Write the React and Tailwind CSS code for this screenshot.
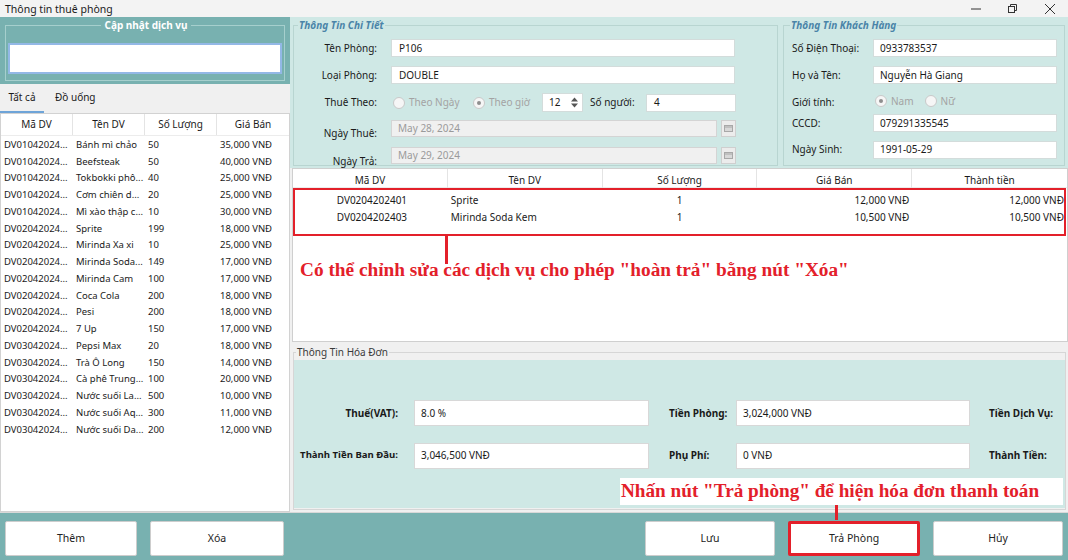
import React from 'react';

const leftRows = [
  ['DV01042024...', 'Bánh mì chảo', '50', '35,000 VNĐ'],
  ['DV01042024...', 'Beefsteak', '50', '40,000 VNĐ'],
  ['DV01042024...', 'Tokbokki phô...', '40', '25,000 VNĐ'],
  ['DV01042024...', 'Cơm chiên d...', '20', '25,000 VNĐ'],
  ['DV01042024...', 'Mì xào thập c...', '10', '30,000 VNĐ'],
  ['DV02042024...', 'Sprite', '199', '18,000 VNĐ'],
  ['DV02042024...', 'Mirinda Xa xi', '10', '25,000 VNĐ'],
  ['DV02042024...', 'Mirinda Soda...', '149', '17,000 VNĐ'],
  ['DV02042024...', 'Mirinda Cam', '100', '17,000 VNĐ'],
  ['DV02042024...', 'Coca Cola', '200', '18,000 VNĐ'],
  ['DV02042024...', 'Pesi', '200', '18,000 VNĐ'],
  ['DV02042024...', '7 Up', '150', '17,000 VNĐ'],
  ['DV03042024...', 'Pepsi Max', '20', '18,000 VNĐ'],
  ['DV03042024...', 'Trà Ô Long', '150', '14,000 VNĐ'],
  ['DV03042024...', 'Cà phê Trung...', '100', '20,000 VNĐ'],
  ['DV03042024...', 'Nước suối La...', '500', '10,000 VNĐ'],
  ['DV03042024...', 'Nước suối Aq...', '300', '11,000 VNĐ'],
  ['DV03042024...', 'Nước suối Da...', '200', '12,000 VNĐ'],
];

const usedRows = [
  ['DV0204202401', 'Sprite', '1', '12,000 VNĐ', '12,000 VNĐ'],
  ['DV0204202403', 'Mirinda Soda Kem', '1', '10,500 VNĐ', '10,500 VNĐ'],
];

const Input = ({ value, className = '' }) => (
  <div className={`h-[18px] bg-white border border-[#d3dcdb] flex items-center pl-[7px] whitespace-nowrap ${className}`}>
    {value}
  </div>
);

const Radio = ({ checked, label }) => (
  <div className="flex items-center text-[#a3a3a3]">
    <span className="w-[12px] h-[12px] rounded-full border border-[#c9c9c9] bg-[#f6f6f6] flex items-center justify-center">
      {checked && <span className="w-[4px] h-[4px] rounded-full bg-[#8e8e8e]" />}
    </span>
    <span className="ml-[4px]">{label}</span>
  </div>
);

const DateField = ({ value }) => (
  <div className="flex items-center h-[17px] ml-[14px]">
    <div className="w-[326px] h-full bg-[#f0f0f0] border border-[#d4d4d4] flex items-center pl-[6px] text-[#9a9a9a]">
      {value}
    </div>
    <div className="ml-[4px] w-[15px] h-full bg-[#ececec] border border-[#cfcfcf] flex items-center justify-center">
      <svg width="9" height="7" viewBox="0 0 9 7">
        <rect x="0.5" y="0.5" width="8" height="6" fill="#d8d8d8" stroke="#a8a8a8" />
        <line x1="0.5" y1="2" x2="8.5" y2="2" stroke="#a8a8a8" />
      </svg>
    </div>
  </div>
);

const Button = ({ children, className = '' }) => (
  <div className={`h-[35px] bg-white rounded-[2px] flex items-center justify-center text-[10.5px] text-[#222] ${className}`}>
    {children}
  </div>
);

export default function App() {
  return (
    <div className="relative w-[1068px] h-[560px] flex flex-col bg-[#f0f0f0] overflow-hidden font-['Noto_Sans',sans-serif] text-[#1a1a1a]">
      {/* title bar */}
      <div className="h-[17px] flex items-center bg-[#f3f3f3] pl-[5px] text-[10.5px]">
        <span className="pt-[2px]">Thông tin thuê phòng</span>
        <div className="ml-auto flex h-full items-center">
          <div className="w-[37px] flex justify-center">
            <svg width="10" height="2" viewBox="0 0 10 2"><line x1="0" y1="1" x2="10" y2="1" stroke="#333" /></svg>
          </div>
          <div className="w-[37px] flex justify-center">
            <svg width="9" height="9" viewBox="0 0 9 9" fill="none" stroke="#333">
              <rect x="0.5" y="2.5" width="6" height="6" />
              <path d="M2.5 2.5V0.5H8.5V6.5H6.5" />
            </svg>
          </div>
          <div className="w-[37px] flex justify-center">
            <svg width="10" height="10" viewBox="0 0 10 10" stroke="#333"><line x1="0" y1="0" x2="10" y2="10" /><line x1="10" y1="0" x2="0" y2="10" /></svg>
          </div>
        </div>
      </div>

      <div className="flex flex-1 min-h-0">
        {/* left column */}
        <div className="w-[290px] flex flex-col">
          <div className="h-[67px] bg-[#78b1b0] px-[5px] pt-[1px]">
            <fieldset className="h-[63px] border border-[#a6cfcd] pl-[2px]">
              <legend className="mx-auto px-[3px] text-[10px] leading-[14px] font-bold text-white">Cập nhật dịch vụ</legend>
              <div className="mt-[11px] w-[274px] h-[31px] bg-white border-2 border-[#93b8e6]" />
            </fieldset>
          </div>
          <div className="h-[29px] flex text-[10px]">
            <div className="w-[44px] flex items-center justify-center border-b-2 border-[#6ea4d8]">Tất cả</div>
            <div className="ml-[11px] flex items-center pb-[2px]">Đồ uống</div>
          </div>
          <div className="flex-1 bg-white border border-[#d2d2d2] text-[9.5px]">
            <div className="grid grid-cols-[72px_72px_72px_72px] h-[22px] border-b border-[#ececec] text-[10px]">
              {['Mã DV', 'Tên DV', 'Số Lượng', 'Giá Bán'].map((h, i) => (
                <div key={h} className={`flex items-center justify-center ${i < 3 ? 'border-r border-[#e4e4e4]' : ''}`}>{h}</div>
              ))}
            </div>
            <div className="pt-[0.5px]">
              {leftRows.map((r, i) => (
                <div key={i} className="grid grid-cols-[72px_72px_72px_72px] h-[16.76px] items-center">
                  {r.map((c, j) => (
                    <div key={j} className="pl-[3px] whitespace-nowrap overflow-hidden">{c}</div>
                  ))}
                </div>
              ))}
            </div>
          </div>
        </div>

        {/* right column */}
        <div className="flex-1 flex flex-col">
          <div className="h-[151px] bg-[#cfe8e5] flex text-[10px]">
            <fieldset className="ml-[3px] mt-[1px] w-[485px] h-[148px] border border-[#b8d5d1]">
              <legend className="ml-[4px] px-[1px] text-[10px] leading-[14px] font-bold italic text-[#4a84a8]">Thông Tin Chi Tiết</legend>
              <div className="flex flex-col">
                <div className="mt-[7px] flex items-center h-[18px]">
                  <div className="w-[83px] text-right">Tên Phòng:</div>
                  <Input value="P106" className="ml-[14px] w-[344px]" />
                </div>
                <div className="mt-[9px] flex items-center h-[18px]">
                  <div className="w-[83px] text-right">Loại Phòng:</div>
                  <Input value="DOUBLE" className="ml-[14px] w-[344px]" />
                </div>
                <div className="mt-[9px] flex items-center h-[19px]">
                  <div className="w-[83px] text-right">Thuê Theo:</div>
                  <div className="ml-[16px] w-[80px]"><Radio label="Theo Ngày" /></div>
                  <div className="w-[69px]"><Radio checked label="Theo giờ" /></div>
                  <div className="w-[41px] h-[19px] bg-white border border-[#d3dcdb] flex items-center">
                    <span className="pl-[6px] w-[24px]">12</span>
                    <div className="h-full flex items-center pl-[4px]">
                      <svg width="7" height="11" viewBox="0 0 7 11" fill="#555">
                        <path d="M0 4.5L3.5 0.5L7 4.5Z" />
                        <path d="M0 6.5L3.5 10.5L7 6.5Z" />
                      </svg>
                    </div>
                  </div>
                  <div className="ml-[7px] w-[56px] whitespace-nowrap">Số người:</div>
                  <Input value="4" className="w-[90px]" />
                </div>
                <div className="mt-[8px] flex items-start h-[17px]">
                  <div className="w-[83px] text-right mt-[6px]">Ngày Thuê:</div>
                  <DateField value="May 28, 2024" />
                </div>
                <div className="mt-[9.7px] flex items-start h-[17px]">
                  <div className="w-[83px] text-right mt-[7px]">Ngày Trả:</div>
                  <DateField value="May 29, 2024" />
                </div>
              </div>
            </fieldset>

            <fieldset className="ml-[5px] mt-[1px] w-[282px] h-[148px] border border-[#b8d5d1]">
              <legend className="ml-[6px] px-[1px] text-[10px] leading-[14px] font-bold italic text-[#4a84a8]">Thông Tin Khách Hàng</legend>
              <div className="pl-[8px] flex flex-col">
                <div className="mt-[7px] flex items-center h-[18px]">
                  <div className="w-[81px]">Số Điện Thoại:</div>
                  <Input value="0933783537" className="w-[184px] !pl-[6px]" />
                </div>
                <div className="mt-[9px] flex items-center h-[18px]">
                  <div className="w-[81px]">Họ và Tên:</div>
                  <Input value="Nguyễn Hà Giang" className="w-[184px] !pl-[6px]" />
                </div>
                <div className="mt-[8.3px] flex items-center h-[18px]">
                  <div className="w-[81px] pt-[3px]">Giới tính:</div>
                  <div className="ml-[2px]"><Radio checked label="Nam" /></div>
                  <div className="ml-[11px]"><Radio label="Nữ" /></div>
                </div>
                <div className="mt-[4px] flex items-center h-[18px]">
                  <div className="w-[81px]">CCCD:</div>
                  <Input value="079291335545" className="w-[184px] !pl-[6px]" />
                </div>
                <div className="mt-[8.7px] flex items-center h-[18px]">
                  <div className="w-[81px]">Ngày Sinh:</div>
                  <Input value="1991-05-29" className="w-[184px] !pl-[6px]" />
                </div>
              </div>
            </fieldset>
          </div>

          {/* used services table */}
          <div className="ml-[2px] h-[174px] bg-white border border-[#cfcfcf] text-[10px]">
            <div className="grid grid-cols-5 h-[19px] border-b border-[#ececec]">
              {['Mã DV', 'Tên DV', 'Số Lượng', 'Giá Bán', 'Thành tiền'].map((h, i) => (
                <div key={h} className={`flex items-center justify-center pt-[4px] ${i < 4 ? 'border-r border-[#e4e4e4]' : ''}`}>{h}</div>
              ))}
            </div>
            <div className="mr-[1px] h-[48px] border-2 border-[#e3202a] pt-[1.5px]">
              {usedRows.map((r, i) => (
                <div key={i} className="grid grid-cols-5 h-[17px] items-center">
                  <div className="text-center">{r[0]}</div>
                  <div className="pl-[2px]">{r[1]}</div>
                  <div className="text-center">{r[2]}</div>
                  <div className="text-right pr-[1px]">{r[3]}</div>
                  <div className="text-right">{r[4]}</div>
                </div>
              ))}
            </div>
            <div className="ml-[152px] w-[3px] h-[28px] bg-[#e3202a]" />
            <div className="-mt-[5px] ml-[7px] font-['Liberation_Serif',serif] font-bold text-[19.3px] leading-[22px] text-[#e3202a] whitespace-nowrap">
              Có thể chỉnh sửa các dịch vụ cho phép "hoàn trả" bằng nút "Xóa"
            </div>
          </div>

          {/* invoice */}
          <fieldset className="ml-[3px] mr-[2px] mt-[3px] h-[165px] border border-[#d6d6d6]">
            <legend className="ml-[2px] px-[1px] text-[10px] leading-[14px] text-[#3a3a3a]">Thông Tin Hóa Đơn</legend>
            <div className="mt-[1px] h-[148px] bg-[#cfe8e5] text-[10px]">
              <div className="pt-[40px] flex items-center h-[66px]">
                <div className="w-[104px] text-right font-bold">Thuế(VAT):</div>
                <Input value="8.0 %" className="ml-[16px] w-[235px] !h-[26px] !border-[#d8d8d8] !pl-[6px]" />
                <div className="ml-[18px] w-[69px] pl-[2px] font-bold">Tiền Phòng:</div>
                <Input value="3,024,000 VNĐ" className="w-[234px] !h-[26px] !border-[#d8d8d8] !pl-[6px]" />
                <div className="ml-[19px] font-bold">Tiền Dịch Vụ:</div>
              </div>
              <div className="mt-[16.7px] flex items-center h-[26px]">
                <div className="w-[104px] text-right font-bold whitespace-nowrap text-[9.6px]">Thành Tiền Ban Đầu:</div>
                <Input value="3,046,500 VNĐ" className="ml-[16px] w-[235px] !h-[26px] !border-[#d8d8d8] !pl-[6px]" />
                <div className="ml-[18px] w-[69px] pl-[2px] font-bold">Phụ Phí:</div>
                <Input value="0 VNĐ" className="w-[234px] !h-[26px] !border-[#d8d8d8] !pl-[6px]" />
                <div className="ml-[19px] font-bold">Thành Tiền:</div>
              </div>
            </div>
          </fieldset>
        </div>
      </div>

      {/* bottom bar */}
      <div className="h-[48px] bg-[#78b1b0] flex items-start pt-[8px] border-t border-[#d8d8d8]">
        <Button className="ml-[5px] w-[132px] border border-[#cdcdcd]">Thêm</Button>
        <Button className="ml-[13px] w-[134px] border border-[#cdcdcd]">Xóa</Button>
        <Button className="ml-auto w-[130px] border border-[#cdcdcd]">Lưu</Button>
        <Button className="ml-[13px] w-[132px] border-[3px] border-[#e3202a]">Trả Phòng</Button>
        <Button className="ml-[13px] mr-[5px] w-[130px] border border-[#cdcdcd]">Hủy</Button>
      </div>

      {/* annotation over invoice / buttons */}
      <div className="absolute left-[620px] top-[478px] w-[443px] h-[27px] bg-white flex items-center pl-[1px] font-['Liberation_Serif',serif] font-bold text-[19.2px] text-[#e3202a] whitespace-nowrap">
        Nhấn nút "Trả phòng" để hiện hóa đơn thanh toán
      </div>
      <div className="absolute left-[835px] top-[505px] w-[3px] h-[15px] bg-[#e3202a]" />
    </div>
  );
}
